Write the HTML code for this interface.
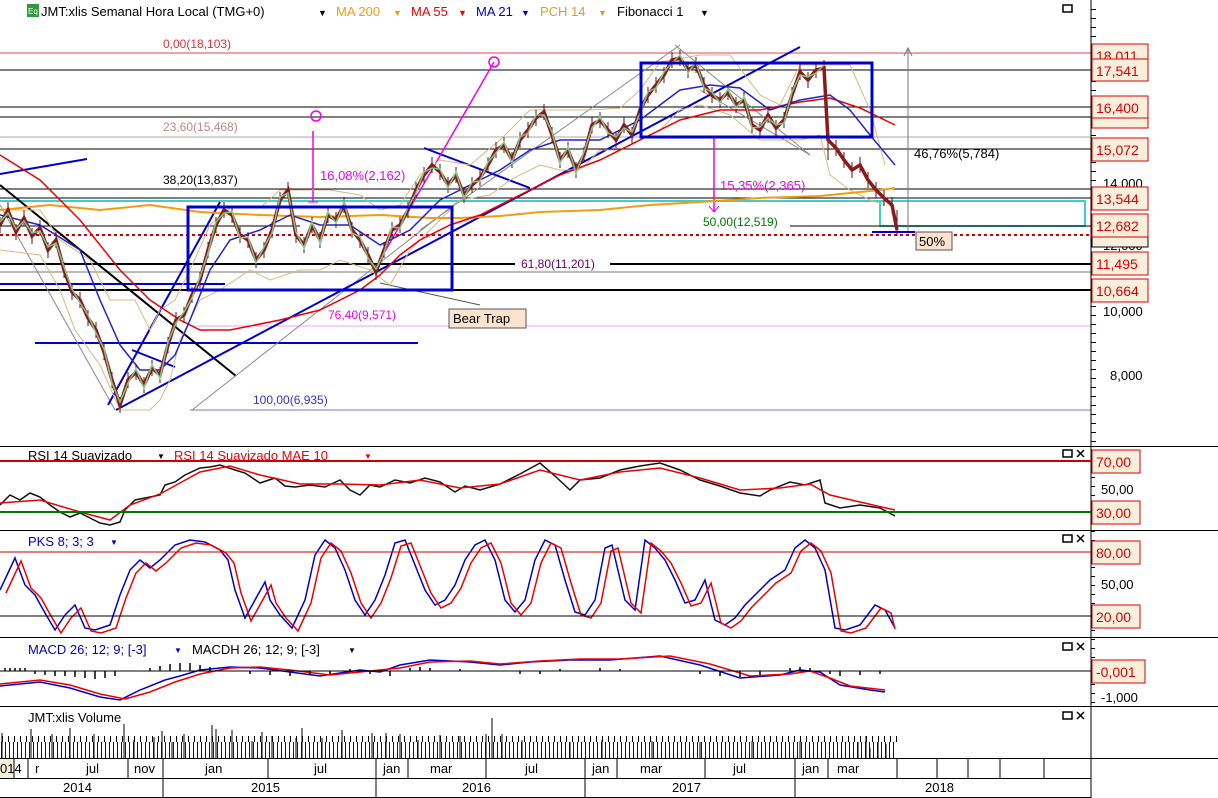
<!DOCTYPE html>
<html><head><meta charset="utf-8"><style>
html,body{margin:0;padding:0;background:#fff;width:1218px;height:798px;overflow:hidden}
svg{display:block;font-family:"Liberation Sans",Arial,sans-serif}
.t{font-size:13px}
</style></head><body>
<svg width="1218" height="798" viewBox="0 0 1218 798" xmlns="http://www.w3.org/2000/svg">
<defs>
<pattern id="vol" x="0" y="0" width="4" height="40" patternUnits="userSpaceOnUse"><rect x="1" y="0" width="1" height="40" fill="#000"/></pattern>
<pattern id="vol2" x="2" y="0" width="6" height="40" patternUnits="userSpaceOnUse"><rect x="0" y="0" width="1" height="40" fill="#000"/></pattern>
<pattern id="tk" x="0" y="0" width="5" height="9" patternUnits="userSpaceOnUse"><rect x="0" y="0" width="5" height="1" fill="#000"/></pattern>
</defs>
<rect width="1218" height="798" fill="#fff"/>
<g stroke-width="1" fill="none">
<line x1="0" y1="53" x2="1091" y2="53" stroke="#f4a0a8" stroke-width="2"/>
<line x1="0" y1="70" x2="1091" y2="70" stroke="#000"/>
<line x1="0" y1="107" x2="1091" y2="107" stroke="#000"/>
<line x1="0" y1="117" x2="1091" y2="117" stroke="#000"/>
<line x1="0" y1="137" x2="1091" y2="137" stroke="#aaa"/>
<line x1="0" y1="149" x2="1091" y2="149" stroke="#000"/>
<line x1="0" y1="189" x2="1091" y2="189" stroke="#000"/>
<line x1="0" y1="198" x2="1091" y2="198" stroke="#000"/>
<line x1="0" y1="201" x2="1085" y2="201" stroke="#4cc" stroke-width="2"/>
<rect x="880" y="201" width="205" height="25" stroke="#4cc" stroke-width="2"/>
<line x1="0" y1="226" x2="300" y2="226" stroke="#000"/>
<line x1="790" y1="226" x2="1091" y2="226" stroke="#000"/>
<line x1="0" y1="235" x2="1091" y2="235" stroke="#c00" stroke-width="2" stroke-dasharray="3,3"/>
<line x1="0" y1="264" x2="515" y2="264" stroke="#000" stroke-width="2"/>
<line x1="610" y1="264" x2="1091" y2="264" stroke="#000" stroke-width="2"/>
<line x1="0" y1="272" x2="1091" y2="272" stroke="#bbb" stroke-width="2"/>
<line x1="0" y1="290" x2="1091" y2="290" stroke="#000" stroke-width="2"/>
<line x1="190" y1="326" x2="1091" y2="326" stroke="#f0a0f0"/>
<line x1="190" y1="410" x2="1091" y2="410" stroke="#77c"/>
<line x1="0" y1="284" x2="225" y2="284" stroke="#00c" stroke-width="2"/>
<line x1="35" y1="343" x2="418" y2="343" stroke="#00c" stroke-width="2"/>
<line x1="0" y1="174" x2="87" y2="159" stroke="#00c" stroke-width="2"/>
<line x1="0" y1="185" x2="236" y2="376" stroke="#000" stroke-width="2"/>
<line x1="0" y1="205" x2="115" y2="410" stroke="#888"/>
<line x1="192" y1="410" x2="460" y2="200" stroke="#888"/>
<line x1="420" y1="230" x2="680" y2="45" stroke="#888"/>
<line x1="675" y1="45" x2="810" y2="155" stroke="#888"/>
<line x1="700" y1="90" x2="810" y2="155" stroke="#888"/>
<line x1="380" y1="283" x2="480" y2="305" stroke="#555"/>
<line x1="116" y1="410" x2="800" y2="47" stroke="#00c" stroke-width="2"/>
<line x1="108" y1="405" x2="220" y2="202" stroke="#00c" stroke-width="2"/>
<line x1="132" y1="350" x2="175" y2="367" stroke="#00c" stroke-width="2"/>
<line x1="424" y1="148" x2="530" y2="188" stroke="#00c" stroke-width="2"/>
<line x1="380" y1="260" x2="494" y2="62" stroke="#e0e" stroke-width="1.5"/>
<circle cx="494" cy="62" r="5" stroke="#e0e" stroke-width="1.5"/>
<circle cx="316" cy="116" r="5" stroke="#e0e" stroke-width="1.5"/>
<line x1="313" y1="131" x2="313" y2="202" stroke="#e0e" stroke-width="1.5"/>
<line x1="308" y1="202" x2="318" y2="202" stroke="#e0e"/>
<line x1="714" y1="137" x2="714" y2="212" stroke="#e0e" stroke-width="1.5"/>
<path d="M709 206 L714 212 L719 206" stroke="#e0e"/>
<line x1="908" y1="48" x2="908" y2="233" stroke="#777"/>
<path d="M904 56 L908 48 L912 56" stroke="#777"/>
<line x1="872" y1="232" x2="915" y2="232" stroke="#00c" stroke-width="2"/>
</g>
<!-- PCH bands -->
<g fill="none" stroke="#d8b880" stroke-width="1">
<polyline points="0,210 40,210 60,240 90,260 110,300 120,300 135,300 150,330 160,310 175,300 190,270 210,225 230,208 260,208 280,190 300,190 330,190 360,195 380,210 400,205 420,175 440,160 470,165 500,140 530,110 560,110 590,110 620,108 640,90 660,62 700,55 730,55 760,95 780,105 800,65 830,65 850,65 870,110 885,165"/>
<polyline points="0,250 40,255 60,290 75,330 100,365 120,410 150,410 160,400 170,380 180,340 200,300 220,290 250,270 270,280 300,270 320,270 340,260 370,270 390,285 410,250 430,230 460,200 490,195 510,180 540,165 560,170 580,170 600,150 620,150 640,140 660,130 680,110 700,105 730,115 760,140 780,140 800,140 820,135 830,175 850,190 870,200 885,205"/>
</g>
<!-- MAs -->
<g fill="none" stroke-width="2">
<polyline stroke="#f39c12" points="0,210 50,205 100,210 150,205 200,212 260,215 320,217 380,215 430,218 460,218 500,216 540,212 600,210 650,205 700,202 760,198 820,196 880,190 895,188"/>
<polyline stroke="#e00" stroke-width="1.5" points="0,155 40,180 80,220 120,270 150,300 180,320 200,330 230,330 280,320 320,310 360,290 380,275 400,255 420,240 450,225 480,215 520,195 560,175 600,160 640,140 680,120 720,110 760,110 800,102 830,98 860,108 895,125"/>
<polyline stroke="#22c" stroke-width="1.5" points="0,215 40,225 80,250 100,300 120,345 140,370 160,370 175,355 190,320 210,270 230,240 260,230 290,215 320,225 350,225 380,245 410,230 440,200 470,185 500,170 530,150 560,140 600,140 640,120 680,90 710,85 740,88 770,110 800,100 830,95 850,110 870,135 895,165"/>
</g>
<!-- price (candles approximation) -->
<g fill="none">
<path stroke="#5a1010" stroke-width="1" d="M0 217v16M8 202v16M16 224v16M24 210v16M32 228v16M40 220v16M48 242v16M56 232v16M64 262v16M72 284v16M80 292v16M88 310v16M96 322v16M104 344v16M112 372v16M120 397v16M128 372v16M136 364v16M144 377v16M152 360v16M160 367v16M168 337v16M176 312v16M184 307v16M192 287v16M200 272v16M208 242v16M216 217v16M224 202v16M232 207v16M240 227v16M248 232v16M256 252v16M264 242v16M272 222v16M280 192v16M288 182v16M296 227v16M304 237v16M312 217v16M320 232v16M328 207v16M336 212v16M344 197v16M352 222v16M360 232v16M368 247v16M376 264v16M384 242v16M392 222v16M400 217v16M408 202v16M416 182v16M424 167v16M432 157v16M440 164v16M448 177v16M456 167v16M464 187v16M472 177v16M480 170v16M488 157v16M496 142v16M504 137v16M512 152v16M520 132v16M528 122v16M536 110v16M544 104v16M552 127v16M560 152v16M568 142v16M576 162v16M584 147v16M592 117v16M600 112v16M608 122v16M616 132v16M624 117v16M632 127v16M640 102v16M648 87v16M656 77v16M664 67v16M672 52v16M680 50v16M688 62v16M696 57v16M704 77v16M712 87v16M720 92v16M728 84v16M736 97v16M744 92v16M752 117v16M760 122v16M768 107v16M776 120v16M784 112v16M792 87v16M800 64v16M808 72v16M816 62v16M824 60v16M828 120v40M836 140v16M844 152v16M852 162v16M860 157v16M868 172v16M876 182v16M884 190v16M892 197v16M897 210v26"/>
<polyline stroke="#8b1a1a" stroke-width="3.5" points="0,225 8,210 16,232 24,218 32,236 40,228 48,250 56,240 64,270 72,292 80,300 88,318 96,330 104,352 112,380 120,405 128,380 136,372 144,385 152,368 160,375 168,345 176,320 184,315 192,295 200,280 208,250 216,225 224,210 232,215 240,235 248,240 256,260 264,250 272,230 280,200 288,190 296,235 304,245 312,225 320,240 328,215 336,220 344,205 352,230 360,240 368,255 376,272 384,250 392,230 400,225 408,210 416,190 424,175 432,165 440,172 448,185 456,175 464,195 472,185 480,178 488,165 496,150 504,145 512,160 520,140 528,130 536,118 544,112 552,135 560,160 568,150 576,170 584,155 592,125 600,120 608,130 616,140 624,125 632,135 640,110 648,95 656,85 664,75 672,60 680,58 688,70 696,65 704,85 712,95 720,100 728,92 736,105 744,100 752,125 760,130 768,115 776,128 784,120 792,95 800,72 808,80 816,70 824,68 828,140 836,148 844,160 852,170 860,165 868,180 876,190 884,198 892,205 897,230"/>
<polyline stroke="#7fc88a" stroke-width="1.5" points="0,222 8,213 16,229 24,221 32,233 40,231 48,247 56,243 64,267 72,289 80,303 88,315 96,333 104,349 112,383 120,402 128,383 136,369 144,388 152,365 160,378 168,342 176,323 184,312 192,298 200,277 208,253 216,222 224,213 232,212 240,238 248,237 256,263 264,247 272,233 280,197 288,193 296,232 304,248 312,222 320,243 328,212 336,223 344,202 352,233 360,237 368,258 376,269 384,253 392,227 400,228 408,207 416,193 424,172 432,168 440,169 448,188 456,172 464,198 472,182 480,181 488,162 496,153 504,142 512,163 520,137 528,133 536,115 544,115 552,132 560,163 568,147 576,173 584,152 592,128 600,117 608,133 616,137 624,128 632,132 640,113 648,92 656,88 664,72 672,63 680,55 688,73 696,62 704,88 712,92 720,103 728,89 736,108 744,97 752,128 760,127 768,118 776,125 784,123 792,92 800,75 808,77 816,73 824,65"/>
</g>
<rect x="188" y="207" width="264" height="83" fill="none" stroke="#00c" stroke-width="3"/>
<rect x="641" y="63" width="231" height="74" fill="none" stroke="#00c" stroke-width="3"/>
<!-- indicators -->
<g fill="none" stroke-width="1.5">
<polyline stroke="#111" points="0,505 10,495 20,500 30,493 40,497 50,505 60,512 70,517 80,513 90,518 100,523 110,525 120,522 125,510 135,500 150,497 160,495 165,485 175,482 185,475 200,468 210,467 220,465 235,470 245,473 260,483 275,478 285,486 295,487 310,485 325,487 340,480 350,490 360,495 370,485 380,487 395,480 410,483 425,478 440,482 455,492 465,486 480,490 500,484 520,474 540,463 555,476 570,490 580,480 600,478 620,470 640,466 660,463 680,470 700,480 720,486 740,493 760,496 770,490 790,482 805,485 820,480 825,503 840,508 860,505 880,508 895,516"/>
<polyline stroke="#e00" points="0,503 40,500 80,512 110,520 130,505 160,494 200,472 230,466 260,475 300,484 340,484 380,485 420,480 460,488 500,484 540,470 580,480 620,472 660,468 700,478 740,490 780,488 810,484 830,495 860,502 895,510"/>
<g id="pk">
<polyline stroke="#00c" points="0,590 15,558 25,585 35,595 45,613 55,630 65,615 75,605 85,628 95,630 110,625 120,595 130,570 140,560 150,568 160,560 175,545 190,540 205,542 220,550 228,560 235,590 245,618 255,600 265,582 270,600 280,615 292,628 305,600 315,555 325,540 335,548 345,570 355,600 365,615 375,600 385,575 395,543 405,540 415,565 425,590 435,605 445,600 455,585 465,560 475,545 485,540 495,560 505,600 515,612 525,600 535,560 545,540 555,545 565,580 575,612 585,615 595,600 605,548 612,545 625,600 635,610 645,540 655,548 665,560 675,580 685,603 695,600 705,580 715,620 725,625 735,618 745,605 760,590 770,580 785,570 795,548 805,540 815,548 825,570 835,628 845,630 860,625 875,605 885,610 895,628"/>
</g>
<polyline stroke="#e00" transform="translate(6,3)" points="0,590 15,558 25,585 35,595 45,613 55,630 65,615 75,605 85,628 95,630 110,625 120,595 130,570 140,560 150,568 160,560 175,545 190,540 205,542 220,550 228,560 235,590 245,618 255,600 265,582 270,600 280,615 292,628 305,600 315,555 325,540 335,548 345,570 355,600 365,615 375,600 385,575 395,543 405,540 415,565 425,590 435,605 445,600 455,585 465,560 475,545 485,540 495,560 505,600 515,612 525,600 535,560 545,540 555,545 565,580 575,612 585,615 595,600 605,548 612,545 625,600 635,610 645,540 655,548 665,560 675,580 685,603 695,600 705,580 715,620 725,625 735,618 745,605 760,590 770,580 785,570 795,548 805,540 815,548 825,570 835,628 845,630 860,625 875,605 885,610 889,626"/>
<polyline stroke="#00c" points="0,686 40,682 70,688 100,697 120,700 140,690 165,680 180,676 200,670 230,667 260,668 290,672 320,676 360,670 380,672 400,665 430,660 470,662 500,665 530,662 570,660 610,660 660,656 700,665 740,678 780,675 800,670 820,672 840,685 870,690 885,692"/>
<polyline stroke="#e00" points="0,684 40,680 70,685 100,694 125,699 150,692 175,682 200,674 230,668 260,667 290,670 330,675 370,671 400,668 430,662 470,661 500,664 540,661 580,659 620,659 670,656 710,664 750,676 790,674 810,671 830,678 850,686 885,690"/>
</g>
<g stroke="#000" stroke-width="1.5">
<path d="M5 671v-3M10 671v-3M15 671v-3M20 671v-3M25 671v-3M35 671v3M45 671v4M55 671v5M65 671v5M75 671v6M85 671v7M95 671v8M105 671v7M115 671v5M150 671v-3M160 671v-5M170 671v-7M180 671v-8M190 671v-8M200 671v-6M210 671v-4M250 671v3M270 671v4M290 671v5M310 671v4M330 671v3M350 671v-2M370 671v3M390 671v5M410 671v-3M420 671v-4M430 671v-3M460 671v-2M520 671v3M540 671v3M560 671v-2M600 671v-3M620 671v-2M700 671v3M720 671v5M740 671v6M760 671v4M790 671v-3M800 671v-4M810 671v-3M830 671v3M840 671v5M860 671v4M880 671v3"/>
</g>
<!-- volume -->
<rect x="0" y="742" width="897" height="16" fill="url(#vol)" opacity="0.9"/>
<rect x="0" y="736" width="897" height="6" fill="url(#vol2)"/>
<path stroke="#000" d="M2 758v-25M31 758v-29M52 758v-24M70 758v-30M94 758v-24M124 758v-34M134 758v-18M154 758v-21M162 758v-27M172 758v-16M184 758v-24M212 758v-33M216 758v-29M232 758v-28M252 758v-17M262 758v-26M272 758v-22M296 758v-20M302 758v-30M322 758v-20M342 758v-28M372 758v-25M386 758v-25M400 758v-24M418 758v-18M440 758v-23M460 758v-22M486 758v-24M492 758v-40M502 758v-24M522 758v-18M570 758v-16M602 758v-18M652 758v-17M700 758v-16M752 758v-17M800 758v-17M858 758v-16M866 758v-22M870 758v-10M878 758v-16M886 758v-14"/>
<!-- panel lines -->
<g stroke="#000" fill="none">
<line x1="1091" y1="0" x2="1091" y2="798"/>
<line x1="0" y1="446.5" x2="1218" y2="446.5"/>
<line x1="0" y1="530.5" x2="1218" y2="530.5"/>
<line x1="0" y1="637.5" x2="1218" y2="637.5"/>
<line x1="0" y1="706.5" x2="1218" y2="706.5"/>
<line x1="0" y1="758.5" x2="1218" y2="758.5"/>
<line x1="0" y1="778.5" x2="1091" y2="778.5"/>
<line x1="0" y1="797.5" x2="1091" y2="797.5"/>
<line x1="0" y1="461" x2="1091" y2="461" stroke="#c00" stroke-width="2"/>
<line x1="0" y1="512" x2="1091" y2="512" stroke="#070" stroke-width="2"/>
<line x1="0" y1="552" x2="1091" y2="552" stroke="#c00"/>
<line x1="0" y1="616" x2="1091" y2="616"/>
<line x1="0" y1="671" x2="1091" y2="671"/>
</g>
<rect x="1091" y="4" width="5" height="440" fill="url(#tk)"/>
<rect x="1091" y="449" width="4" height="255" fill="url(#tk)"/>
<!-- header -->
<rect x="27" y="4" width="12" height="13" fill="#2a9a3a"/>
<text x="28" y="14" font-size="8" fill="#fff">Eq</text>
<g class="t">
<text x="41" y="16" fill="#000">JMT:xlis Semanal Hora Local (TMG+0)</text>
<text x="318" y="16" fill="#000" font-size="9">▼</text>
<text x="336" y="16" fill="#f39c12">MA 200</text><text x="393" y="16" fill="#f39c12" font-size="9">▼</text>
<text x="411" y="16" fill="#e00">MA 55</text><text x="458" y="16" fill="#e00" font-size="9">▼</text>
<text x="476" y="16" fill="#00c">MA 21</text><text x="521" y="16" fill="#00c" font-size="9">▼</text>
<text x="540" y="16" fill="#d4a030">PCH 14</text><text x="598" y="16" fill="#d4a030" font-size="9">▼</text>
<text x="617" y="16" fill="#000">Fibonacci 1</text><text x="700" y="16" fill="#000" font-size="9">▼</text>
<text x="163" y="48" fill="#d33" font-size="12">0,00(18,103)</text>
<text x="163" y="131" fill="#b88" font-size="12">23,60(15,468)</text>
<text x="163" y="184" fill="#000" font-size="12">38,20(13,837)</text>
<text x="320" y="180" fill="#e0e">16,08%(2,162)</text>
<text x="720" y="190" fill="#e0e">15,35%(2,365)</text>
<text x="703" y="226" fill="#070" font-size="12">50,00(12,519)</text>
<text x="521" y="268" fill="#606" font-size="12">61,80(11,201)</text>
<text x="328" y="319" fill="#e0e" font-size="12">76,40(9,571)</text>
<text x="253" y="404" fill="#33c" font-size="12">100,00(6,935)</text>
<text x="914" y="158" fill="#000">46,76%(5,784)</text>
</g>
<rect x="449" y="309" width="77" height="19" fill="#fbe3d0" stroke="#555"/>
<text x="453" y="323" class="t">Bear Trap</text>
<rect x="916" y="232" width="36" height="18" fill="#fbe3d0" stroke="#555"/>
<text x="919" y="246" class="t">50%</text>
<g class="t">
<text x="1103" y="188">14,000</text>
<text x="1103" y="250">12,000</text>
<text x="1103" y="316">10,000</text>
<text x="1110" y="380">8,000</text>
<text x="1101" y="494">50,00</text>
<text x="1101" y="589">50,00</text>
<text x="1101" y="702">-1,000</text>
</g>
<g font-size="14" fill="#d00" stroke="#d00">
<rect x="1092" y="106" width="56" height="22" fill="#f8f0dc"/>
<rect x="1092" y="44" width="56" height="22" fill="#f8f0dc"/><text x="1096" y="61" stroke="none">18,011</text>
<rect x="1092" y="59" width="56" height="22" fill="#f8f0dc"/><text x="1096" y="76" stroke="none">17,541</text>
<rect x="1092" y="96" width="56" height="22" fill="#f8f0dc"/><text x="1096" y="113" stroke="none">16,400</text>
<rect x="1092" y="138" width="56" height="23" fill="#f8f0dc"/><text x="1096" y="155" stroke="none">15,072</text>
<rect x="1092" y="224" width="56" height="23" fill="#f8f0dc" stroke="#000"/>
<rect x="1092" y="187" width="56" height="23" fill="#f8f0dc"/><text x="1096" y="204" stroke="none">13,544</text>
<rect x="1092" y="214" width="56" height="23" fill="#f8f0dc"/><text x="1096" y="231" stroke="none">12,682</text>
<rect x="1092" y="252" width="56" height="23" fill="#f8f0dc"/><text x="1096" y="269" stroke="none">11,495</text>
<rect x="1092" y="279" width="56" height="23" fill="#f8f0dc"/><text x="1096" y="296" stroke="none">10,664</text>
<rect x="1092" y="450" width="48" height="23" fill="#f8f0dc"/><text x="1096" y="467" stroke="none">70,00</text>
<rect x="1092" y="501" width="48" height="23" fill="#f8f0dc"/><text x="1096" y="518" stroke="none">30,00</text>
<rect x="1092" y="541" width="48" height="23" fill="#f8f0dc"/><text x="1096" y="558" stroke="none">80,00</text>
<rect x="1092" y="605" width="48" height="23" fill="#f8f0dc"/><text x="1096" y="622" stroke="none">20,00</text>
<rect x="1092" y="660" width="53" height="23" fill="#f8f0dc"/><text x="1096" y="677" stroke="none">-0,001</text>
</g>
<g fill="none" stroke="#000" stroke-width="1.5">
<rect x="1063" y="5" width="9" height="7"/>
<rect x="1063" y="450" width="9" height="7"/><path d="M1077 450l7 7M1084 450l-7 7"/>
<rect x="1063" y="535" width="9" height="7"/><path d="M1077 535l7 7M1084 535l-7 7"/>
<rect x="1063" y="643" width="9" height="7"/><path d="M1077 643l7 7M1084 643l-7 7"/>
<rect x="1063" y="712" width="9" height="7"/><path d="M1077 712l7 7M1084 712l-7 7"/>
</g>
<g class="t">
<text x="28" y="460">RSI 14 Suavizado</text><text x="157" y="459" font-size="8">▼</text>
<text x="174" y="460" fill="#e00">RSI 14 Suavizado MAE 10</text><text x="364" y="459" font-size="8" fill="#e00">▼</text>
<text x="28" y="546" fill="#00c">PKS 8; 3; 3</text><text x="110" y="545" font-size="8" fill="#00c">▼</text>
<text x="28" y="654" fill="#00c">MACD 26; 12; 9; [-3]</text><text x="174" y="653" font-size="8" fill="#00c">▼</text>
<text x="192" y="654">MACDH 26; 12; 9; [-3]</text><text x="348" y="653" font-size="8">▼</text>
<text x="28" y="722">JMT:xlis Volume</text>
</g>
<rect x="0" y="759" width="14" height="19" fill="#f4f0d8"/>
<g stroke="#000">
<line x1="14" y1="759" x2="14" y2="778"/><line x1="28" y1="759" x2="28" y2="778"/>
<line x1="128" y1="759" x2="128" y2="778"/><line x1="163" y1="759" x2="163" y2="798"/>
<line x1="268" y1="759" x2="268" y2="778"/><line x1="376" y1="759" x2="376" y2="798"/>
<line x1="408" y1="759" x2="408" y2="778"/><line x1="486" y1="759" x2="486" y2="778"/>
<line x1="585" y1="759" x2="585" y2="798"/><line x1="617" y1="759" x2="617" y2="778"/>
<line x1="705" y1="759" x2="705" y2="778"/><line x1="795" y1="759" x2="795" y2="798"/>
<line x1="828" y1="759" x2="828" y2="778"/><line x1="897" y1="759" x2="897" y2="778"/>
<line x1="937" y1="759" x2="937" y2="778"/><line x1="968" y1="759" x2="968" y2="778"/>
<line x1="1000" y1="759" x2="1000" y2="778"/><line x1="1044" y1="759" x2="1044" y2="778"/>
</g>
<g class="t">
<text x="0" y="773">014</text><text x="35" y="773">r</text><text x="86" y="773">jul</text>
<text x="134" y="773">nov</text><text x="205" y="773">jan</text><text x="314" y="773">jul</text>
<text x="383" y="773">jan</text><text x="430" y="773">mar</text><text x="525" y="773">jul</text>
<text x="592" y="773">jan</text><text x="640" y="773">mar</text><text x="733" y="773">jul</text>
<text x="802" y="773">jan</text><text x="837" y="773">mar</text>
<text x="63" y="792">2014</text><text x="251" y="792">2015</text><text x="462" y="792">2016</text>
<text x="672" y="792">2017</text><text x="925" y="792">2018</text>
</g>
</svg>
</body></html>
